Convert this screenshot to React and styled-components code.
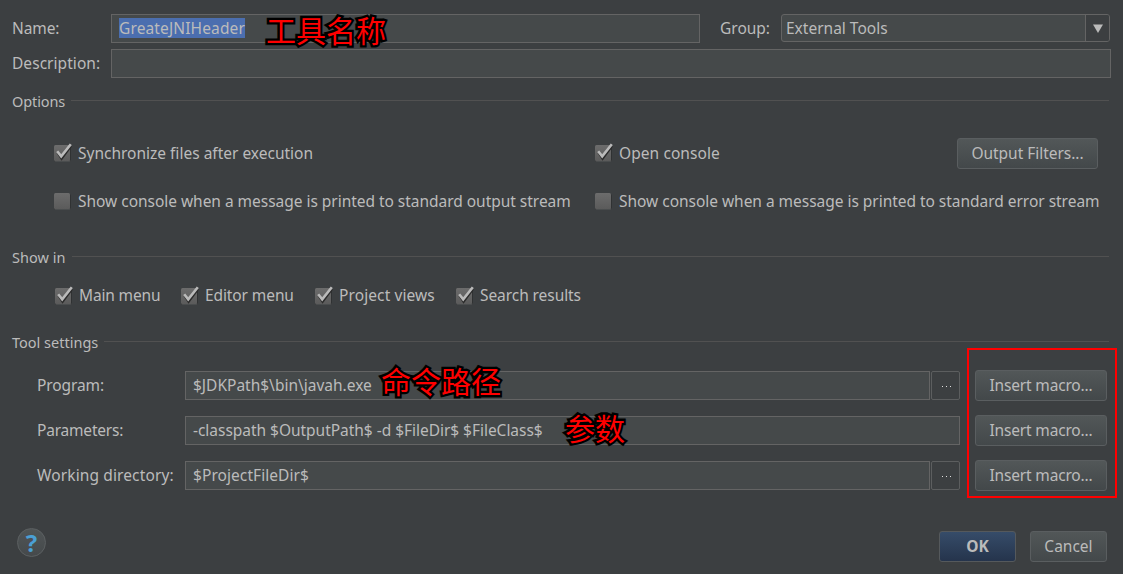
import React from 'react';
import styled, { createGlobalStyle, css } from 'styled-components';

const GlobalStyle = createGlobalStyle`
  * { box-sizing: border-box; }
  body { margin: 0; background: #3c3f41; }
`;

const Dialog = styled.main`
  position: relative;
  width: 1123px;
  height: 574px;
  overflow: hidden;
  padding: 14px 12px 0;
  display: flex;
  flex-direction: column;
  background: #3c3f41;
  color: #bbbbbb;
  font-family: 'Noto Sans', 'Open Sans', sans-serif;
  font-size: 15.5px;
  line-height: 22px;
  white-space: nowrap;
`;

const Text = styled.span`
  display: block;
  padding-bottom: 2px;
  letter-spacing: ${(p) => p.$ls || 0}px;
`;

const FormRow = styled.div`
  display: flex;
  align-items: center;
  height: 29px;
  margin-top: ${(p) => p.$top || 0}px;
`;

const Label = styled.label`
  flex: none;
  width: ${(p) => p.$width}px;
  margin-left: ${(p) => p.$left || 0}px;
`;

const Field = styled.div`
  flex: none;
  display: flex;
  align-items: center;
  width: ${(p) => p.$width}px;
  height: 29px;
  padding-left: 7px;
  border: 1px solid #646464;
  background: #45494a;
`;

const Selected = styled.span`
  height: 20px;
  margin-bottom: 1px;
  line-height: 20px;
  letter-spacing: 0.13px;
  background: #4b6eaf;
`;

const Combo = styled.div`
  display: flex;
  align-items: stretch;
  width: 329px;
  height: 28px;
  margin-bottom: 1px;
  border: 1px solid #646464;
  border-radius: 3px;
  background: #45494a;
`;

const ComboValue = styled.div`
  flex: 1;
  padding-left: 4px;
  line-height: 26px;
`;

const ComboArrow = styled.div`
  width: 24px;
  display: flex;
  align-items: center;
  justify-content: center;
  border-left: 1px solid #646464;
  border-radius: 0 2px 2px 0;
  background: #3c3f41;
`;

const Title = styled.div`
  flex: none;
  display: flex;
  align-items: center;
  gap: 6px;
  height: 21px;
  margin-top: ${(p) => p.$top}px;
  font-size: 14.5px;
  &::after {
    content: '';
    flex: 1;
    height: 1px;
    margin-right: 2px;
    background: #515151;
  }
`;

const TitleText = styled.h2`
  margin: 0;
  padding-top: 1px;
  font: inherit;
  letter-spacing: ${(p) => p.$ls || 0}px;
`;

const OptionRow = styled.div`
  display: grid;
  grid-template-columns: 541px 1fr auto;
  align-items: center;
  height: 31px;
  margin-top: ${(p) => p.$top}px;
  padding: 0 13px 0 42px;
`;

const ShowInRow = styled.div`
  display: grid;
  grid-template-columns: 126px 134px 141px auto;
  align-items: center;
  height: 24px;
  margin-top: 17px;
  padding-left: 43px;
`;

const CheckLabel = styled.label`
  display: flex;
  align-items: center;
  gap: 6px;
`;

const CheckIcon = styled.svg`
  flex: none;
  width: 18px;
  height: 20px;
  margin-bottom: 1px;
`;

const ToolRow = styled.div`
  display: flex;
  align-items: center;
  height: 31px;
  margin-top: ${(p) => p.$top}px;
  padding-left: 25px;
`;

const Browse = styled.button`
  width: 29px;
  height: 29px;
  margin-left: 1px;
  padding: 0 0 0 2px;
  display: flex;
  align-items: center;
  justify-content: center;
  gap: 3px;
  border: 1px solid #5c5e5f;
  border-radius: 2px;
  background: #3c3f41;
`;

const Dot = styled.i`
  width: 1px;
  height: 1px;
  margin-top: 2px;
  background: #e0e0e0;
`;

const Button = styled.button`
  flex: none;
  width: ${(p) => p.$width}px;
  height: 31px;
  margin: ${(p) => p.$margin || 0};
  padding: 0;
  border: 1px solid #5a5e60;
  border-radius: 3px;
  background: linear-gradient(#525758, #43484a);
  color: #bbbbbb;
  font: inherit;
  ${(p) =>
    p.$primary &&
    css`
      border-color: #55595c;
      background: linear-gradient(#364c69, #25344c);
      font-weight: 700;
    `}
`;

const Footer = styled.footer`
  display: flex;
  align-items: flex-start;
  margin-top: 37px;
  padding: 0 4px 0 5px;
`;

const Help = styled.button`
  width: 29px;
  height: 29px;
  padding: 0;
  margin-right: auto;
  border: 1px solid #5c6062;
  border-radius: 50%;
  background: linear-gradient(#505556, #45494b);
  color: #4a9fd4;
  font: 700 24px/25px 'Open Sans', sans-serif;
`;

const Note = styled.div`
  position: absolute;
  left: ${(p) => p.$x}px;
  top: ${(p) => p.$y}px;
  color: #ff0000;
  font: 400 30px/40px 'Noto Sans CJK SC', sans-serif;
  -webkit-text-stroke: 4.6px #000000;
  paint-order: stroke fill;
`;

const Highlight = styled.div`
  position: absolute;
  left: 967px;
  top: 348px;
  width: 150px;
  height: 150px;
  border: 2px solid #ff0000;
`;

function Check({ checked, ls, children }) {
  return (
    <CheckLabel>
      <CheckIcon viewBox="0 0 18 20">
        <defs>
          <linearGradient id="box" x1="0" y1="0" x2="0" y2="1">
            <stop offset="0" stopColor="#6c6c6c" />
            <stop offset="1" stopColor="#5b5b5b" />
          </linearGradient>
        </defs>
        <rect x="0" y="3" width="17" height="16" rx="2" fill="#303233" />
        <rect x="0.5" y="17" width="16" height="2" rx="1" fill="#4a4d4e" />
        <rect x="0" y="2" width="16" height="16" rx="1.5" fill="url(#box)" />
        {checked && (
          <>
            <path d="M3.5 9.3 L7.6 15.8 L17 3" fill="none" stroke="#2b2b2b" strokeWidth="2.2" />
            <path d="M3.2 8.2 L7.2 13.4 L16.8 1.3" fill="none" stroke="#bababa" strokeWidth="2.6" />
          </>
        )}
      </CheckIcon>
      <Text $ls={ls}>{children}</Text>
    </CheckLabel>
  );
}

function ToolSetting({ label, labelLs, value, valueLs, browse, top }) {
  return (
    <ToolRow $top={top}>
      <Label $width={148}><Text $ls={labelLs}>{label}</Text></Label>
      <Field $width={browse ? 745 : 775}><Text $ls={valueLs}>{value}</Text></Field>
      {browse && <Browse aria-label="Browse"><Dot /><Dot /><Dot /></Browse>}
      <Button $width={132} $margin="0 0 0 15px"><Text $ls={-0.18}>Insert macro...</Text></Button>
    </ToolRow>
  );
}

export default function App() {
  return (
    <>
      <GlobalStyle />
      <Dialog>
        <FormRow>
          <Label $width={99}><Text $ls={-0.1}>Name:</Text></Label>
          <Field $width={589}><Selected>GreateJNIHeader</Selected></Field>
          <Label $width={61} $left={20}><Text>Group:</Text></Label>
          <Combo>
            <ComboValue>External Tools</ComboValue>
            <ComboArrow>
              <svg width="10" height="9" viewBox="0 0 10 9"><path d="M0 0.5H10L5 9Z" fill="#bbbbbb" /></svg>
            </ComboArrow>
          </Combo>
        </FormRow>
        <FormRow $top={6}>
          <Label $width={99}><Text $ls={0.05}>Description:</Text></Label>
          <Field $width={1000} />
        </FormRow>

        <Title $top={12}><TitleText $ls={-0.1}>Options</TitleText></Title>
        <OptionRow $top={27}>
          <Check checked>Synchronize files after execution</Check>
          <Check checked ls={0.08}>Open console</Check>
          <Button $width={141}><Text $ls={-0.03}>Output Filters...</Text></Button>
        </OptionRow>
        <OptionRow $top={17}>
          <Check ls={-0.03}>Show console when a message is printed to standard output stream</Check>
          <Check ls={-0.03}>Show console when a message is printed to standard error stream</Check>
        </OptionRow>

        <Title $top={29}><TitleText $ls={0.05}>Show in</TitleText></Title>
        <ShowInRow>
          <Check checked ls={-0.15}>Main menu</Check>
          <Check checked ls={-0.1}>Editor menu</Check>
          <Check checked ls={0.1}>Project views</Check>
          <Check checked ls={-0.07}>Search results</Check>
        </ShowInRow>

        <Title $top={23}><TitleText>Tool settings</TitleText></Title>
        <ToolSetting top={18} label="Program:" labelLs={-0.1} value="$JDKPath$\bin\javah.exe" browse />
        <ToolSetting top={14} label="Parameters:" labelLs={-0.2} value="-classpath $OutputPath$ -d $FileDir$ $FileClass$" valueLs={-0.03} />
        <ToolSetting top={14} label="Working directory:" labelLs={0.12} value="$ProjectFileDir$" valueLs={0.07} browse />

        <Footer>
          <Help>?</Help>
          <Button $primary $width={77} $margin="3px 14px 0 0"><Text>OK</Text></Button>
          <Button $width={77} $margin="3px 0 0"><Text>Cancel</Text></Button>
        </Footer>

        <Note $x={266} $y={9}>工具名称</Note>
        <Note $x={381} $y={360}>命令路径</Note>
        <Note $x={565} $y={407}>参数</Note>
        <Highlight />
      </Dialog>
    </>
  );
}
